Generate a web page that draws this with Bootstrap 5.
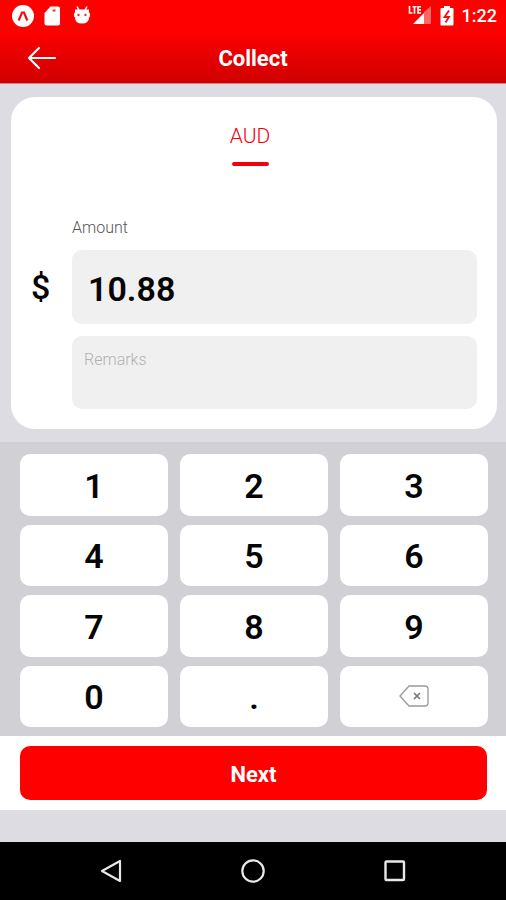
<!DOCTYPE html>
<html lang="en">
<head>
<meta charset="utf-8">
<meta name="viewport" content="width=device-width, initial-scale=1">
<title>Collect</title>
<link href="https://cdn.jsdelivr.net/npm/bootstrap@5.3.0/dist/css/bootstrap.min.css" rel="stylesheet">
<style>
  body { font-family: Roboto, "Liberation Sans", sans-serif; background: #dddce2; color: #050505; }
  svg { display: block; flex: none; }
  .app-head { background: linear-gradient(#ff0000 35%, #cf0000); color: #fff; border-bottom: 1px solid #d98085; }
  .status { height: 32px; padding: 0 9px 0 12px; }
  .clock { font-size: 18px; font-weight: 500; line-height: 24px; margin-left: 8px; }
  .title-bar { display: grid; grid-template-columns: 1fr auto 1fr; height: 51px; align-items: center; padding: 0 26px; }
  .title-bar h1 { font-size: 22px; line-height: 28px; font-weight: 700; padding-top: 2px; }
  .panel { border-radius: 24px; margin: 13px 9px 13px 11px; padding: 24px 20px; }
  .currency { font-size: 21px; line-height: 30px; font-weight: 300; color: #f2000c; border: 0; background: none; margin-right: 8px; }
  .currency::after { content: ""; display: block; height: 4px; width: 37px; border-radius: 2px; background: #f2000c; margin: 11px auto 0; }
  .form-area { display: grid; grid-template-columns: 41px 1fr; margin-top: 50px; margin-bottom: -4px; }
  .form-area label { grid-column: 2; font-size: 16px; line-height: 24px; font-weight: 300; color: #555; margin-bottom: 10px; }
  .dollar { font-size: 34px; font-weight: 500; line-height: 74px; }
  .field { background: #f0f0f0; border: 0; border-radius: 10px; width: 100%; min-width: 0; color: #050505; }
  .amount { height: 74px; font-size: 34px; font-weight: 600; padding: 4px 16px 0; }
  .remarks { grid-column: 2; height: 73px; margin-top: 12px; font-size: 16px; line-height: 24px; font-weight: 300; padding: 12px; resize: none; }
  .remarks::placeholder { color: #b0b0b0; opacity: 1; }
  .keypad { display: grid; grid-template-columns: repeat(3, 1fr); grid-auto-rows: minmax(48px, 1fr); gap: 9px 12px; background: #d1d0d5; padding: 12px 18px 9px 20px; }
  .key { background: #fff; border: 0; border-radius: 10px; font-size: 34px; line-height: 40px; font-weight: 600; color: #050505; padding: 2px 0 0; }
  .key svg { margin: 0 auto 2px; }
  .submit { padding: 10px 19px 10px 20px; }
  .next { background: #ff0000; color: #fff; border: 0; border-radius: 10px; height: 54px; font-size: 22px; font-weight: 700; padding-top: 4px; }
  .sys-nav { background: #000; height: 58px; margin-top: 32px; }
  .sys-nav button { background: none; border: 0; padding: 0; width: 142px; display: flex; justify-content: center; }
</style>
<script src="https://cdn.jsdelivr.net/npm/bootstrap@5.3.0/dist/js/bootstrap.bundle.min.js"></script>
</head>
<body class="d-flex flex-column min-vh-100">
<header class="app-head">
  <div class="status d-flex align-items-center justify-content-between">
    <div class="d-flex align-items-center">
      <svg width="22" height="22" viewBox="0 0 22 22" aria-hidden="true"><circle cx="11" cy="11" r="11" fill="#fff"/><path d="M6.700 15.500 10 7.500h2l3.300 8" fill="none" stroke="#f01010" stroke-width="2.200"/></svg>
      <svg class="ms-2" width="20" height="22" viewBox="0 0 20 22" aria-hidden="true"><path d="M8.500 1.500H16a2 2 0 0 1 2 2v15a2 2 0 0 1-2 2H4.500a2 2 0 0 1-2-2V8z" fill="#fff"/><path d="M10.500 5.500h3" stroke="#e33" stroke-width="2"/></svg>
      <svg class="ms-2" width="24" height="22" viewBox="0 0 24 22" aria-hidden="true"><path d="M7 1.500 9 5M17 1.500 15 5" stroke="#fff" stroke-width="1.500"/><path d="M5 4.500h14v3l1 1v3l-1 1q0 6-7 6t-7-6l-1-1v-3l1-1z" fill="#fff"/><circle cx="8.500" cy="10" r="1.200" fill="#e33"/><circle cx="15.500" cy="10" r="1.200" fill="#e33"/></svg>
    </div>
    <div class="d-flex align-items-center">
      <svg width="24" height="22" viewBox="0 0 24 22" aria-hidden="true"><path d="M16 7 23 1v18h-7z" fill="#ff6666"/><path d="M5 19 16 8v11z" fill="#fff"/><path d="M1.500 1v7H4.500M4.500 1.800h4M6.500 2v6.800M13 1.800H10v6.200h3M10 4.900h3" fill="none" stroke="#fff" stroke-width="1.600"/></svg>
      <svg class="ms-2" width="14" height="20" viewBox="0 0 14 20" aria-hidden="true"><path d="M4 0h6v2h2.500q1 0 1 1v15.500q0 1-1 1h-11q-1 0-1-1V3q0-1 1-1H4z" fill="#fff"/><path d="M9 4.500 4.500 11H9l-3.500 5.500" fill="none" stroke="#e11" stroke-width="1.800"/></svg>
      <span class="clock">1:22</span>
    </div>
  </div>
  <div class="title-bar">
    <button type="button" class="btn p-0 border-0 text-start" aria-label="Back">
      <svg width="30" height="24" viewBox="0 0 30 24" fill="none" stroke="#fff" stroke-width="2.200" stroke-linecap="round" stroke-linejoin="round"><path d="M29 12H3M13 2 3 12l10 10"/></svg>
    </button>
    <h1 class="mb-0">Collect</h1>
  </div>
</header>
<main class="d-flex flex-column flex-grow-1">
  <section class="panel bg-white">
    <div class="text-center"><button type="button" class="currency p-0">AUD</button></div>
    <div class="form-area">
      <label for="amount">Amount</label>
      <span class="dollar">$</span>
      <input id="amount" class="field amount" type="text" inputmode="decimal" value="10.88">
      <textarea class="field remarks" placeholder="Remarks" aria-label="Remarks"></textarea>
    </div>
  </section>
  <section class="keypad flex-grow-1" aria-label="Keypad">
    <button type="button" class="key">1</button>
    <button type="button" class="key">2</button>
    <button type="button" class="key">3</button>
    <button type="button" class="key">4</button>
    <button type="button" class="key">5</button>
    <button type="button" class="key">6</button>
    <button type="button" class="key">7</button>
    <button type="button" class="key">8</button>
    <button type="button" class="key">9</button>
    <button type="button" class="key">0</button>
    <button type="button" class="key">.</button>
    <button type="button" class="key" aria-label="Delete">
      <svg width="30" height="22" viewBox="0 0 30 22" fill="none" stroke="#999" stroke-width="1.300" stroke-linejoin="round"><path d="M10 1h16q3 0 3 3v14q0 3-3 3H10L1 11z"/><path d="m15 8 6 6m0-6-6 6" stroke="#777" stroke-width="1.700"/></svg>
    </button>
  </section>
  <div class="submit bg-white"><button type="button" class="next w-100 d-block">Next</button></div>
</main>
<nav class="sys-nav d-flex justify-content-center align-items-center" aria-label="System">
  <button type="button" aria-label="Back"><svg width="24" height="26" viewBox="0 0 24 26" fill="none" stroke="#e8e8e8" stroke-width="2.200" stroke-linejoin="round"><path d="M21 3v20L3 13z"/></svg></button>
  <button type="button" aria-label="Home"><svg width="26" height="26" viewBox="0 0 26 26" fill="none" stroke="#e8e8e8" stroke-width="2.200"><circle cx="13" cy="13" r="10.700"/></svg></button>
  <button type="button" aria-label="Recents"><svg width="24" height="24" viewBox="0 0 24 24" fill="none" stroke="#e8e8e8" stroke-width="2.400"><rect x="2.500" y="2.500" width="18.500" height="18.500" rx="1"/></svg></button>
</nav>
</body>
</html>
